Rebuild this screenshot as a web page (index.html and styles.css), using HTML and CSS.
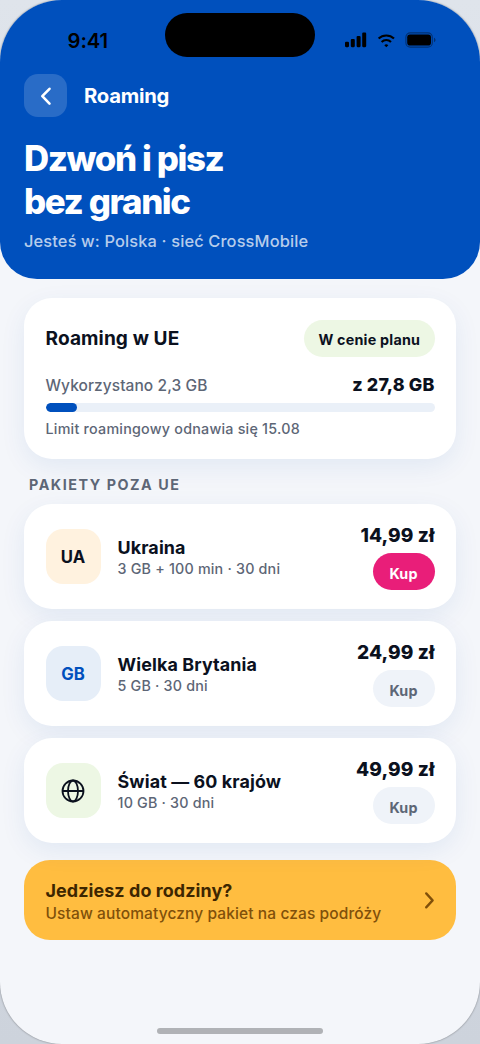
FILE: index.html
```html
<!DOCTYPE html>
<html lang="pl">
<head>
<meta charset="utf-8">
<title>Roaming</title>
<link rel="stylesheet" href="styles.css">
</head>
<body>
<div class="phone">
  <header class="hero">
    <div class="status">
      <span class="time">9:41</span>
      <span class="island"></span>
      <svg class="signals" width="92" height="16" viewBox="0 0 92 16">
        <rect x="0" y="9.8" width="4" height="5.4" rx="1.1"/>
        <rect x="5.8" y="7" width="4" height="8.2" rx="1.1"/>
        <rect x="11.6" y="4" width="4" height="11.2" rx="1.1"/>
        <rect x="17.2" y="0.6" width="4" height="14.6" rx="1.1"/>
        <g fill="none" stroke="#000" stroke-width="2.1">
          <path d="M33.6 6.6a11 11 0 0 1 15.4 0"/>
          <path d="M36.6 10a6.7 6.7 0 0 1 9.4 0"/>
        </g>
        <path d="M41.3 15.3l-2-2.1a2.8 2.8 0 0 1 4 0z"/>
        <rect x="60.9" y="0.9" width="26.4" height="14.2" rx="4.4" fill="none" stroke="#000" stroke-opacity=".4" stroke-width="1.1"/>
        <rect x="62.2" y="2.4" width="23.8" height="11.2" rx="2.8"/>
        <path d="M89 5.8c2 .7 2 3.7 0 4.4z" opacity=".4"/>
      </svg>
    </div>
    <nav class="nav">
      <button class="back" aria-label="Wstecz">
        <svg width="24" height="24" viewBox="0 0 24 24"><path d="M15.5 4.8L8.3 12.2l7.2 7.4"/></svg>
      </button>
      <span class="nav-title">Roaming</span>
    </nav>
    <h1 class="headline">Dzwoń i pisz<br>bez granic</h1>
    <p class="location">Jesteś w: Polska · sieć CrossMobile</p>
  </header>

  <main class="content">
    <section class="card usage">
      <div class="row">
        <h2 class="usage-title">Roaming w UE</h2>
        <span class="pill">W cenie planu</span>
      </div>
      <div class="row amounts">
        <span class="used">Wykorzystano 2,3 GB</span>
        <span class="total">z 27,8 GB</span>
      </div>
      <div class="track"><div class="fill"></div></div>
      <p class="renewal">Limit roamingowy odnawia się 15.08</p>
    </section>

    <h3 class="section-label">PAKIETY POZA UE</h3>

    <div class="packages">
      <article class="card package">
        <div class="badge badge-cream">UA</div>
        <div class="info"><div class="name">Ukraina</div><div class="detail">3 GB + 100 min · 30 dni</div></div>
        <div class="offer"><div class="price">14,99 zł</div><button class="buy buy-primary">Kup</button></div>
      </article>
      <article class="card package">
        <div class="badge badge-blue">GB</div>
        <div class="info"><div class="name">Wielka Brytania</div><div class="detail">5 GB · 30 dni</div></div>
        <div class="offer"><div class="price">24,99 zł</div><button class="buy">Kup</button></div>
      </article>
      <article class="card package">
        <div class="badge badge-green">
          <svg width="26" height="26" viewBox="0 0 26 26"><circle cx="13" cy="13" r="10.5"/><ellipse cx="13" cy="13" rx="5" ry="10.5"/><path d="M2.4 13h21.2"/></svg>
        </div>
        <div class="info"><div class="name">Świat — 60 krajów</div><div class="detail">10 GB · 30 dni</div></div>
        <div class="offer"><div class="price">49,99 zł</div><button class="buy">Kup</button></div>
      </article>
    </div>

    <a class="banner">
      <div class="banner-copy"><div class="banner-title">Jedziesz do rodziny?</div><div class="banner-text">Ustaw automatyczny pakiet na czas podróży</div></div>
      <svg width="10" height="18" viewBox="0 0 10 18"><path d="M1.2 2.4l6.4 7-6.4 7"/></svg>
    </a>
  </main>
  <div class="home-bar"></div>
</div>
</body>
</html>
```
FILE: styles.css
```css
* { box-sizing: border-box; }
body {
  margin: 0;
  width: 480px;
  height: 1044px;
  overflow: hidden;
  background: linear-gradient(#dfe4eb, #cdd3dc);
  font-family: Inter, "Liberation Sans", sans-serif;
  color: #0b111e;
}
h1, h2, h3, p { margin: 0; }
button { border: 0; padding: 0; font: inherit; }
.phone {
  display: flex;
  flex-direction: column;
  width: 480px;
  height: 1044px;
  border-radius: 62px;
  overflow: hidden;
  background: #f4f6fa;
  box-shadow: 0 0 2px rgba(0, 0, 0, .45);
}
.hero {
  height: 279px;
  flex: none;
  padding: 0 24px;
  border-radius: 0 0 37px 37px;
  background: #0050bd;
  color: #fff;
}
.status {
  display: grid;
  grid-template-columns: 141px 150px 1fr;
  height: 74px;
  padding-top: 13px;
  align-items: start;
}
.time {
  padding: 16px 0 0 43.6px;
  font-size: 20.3px;
  line-height: 24px;
  font-weight: 600;
  letter-spacing: -.1px;
  color: #000;
}
.island { height: 44px; border-radius: 22px; background: #000; }
.signals { margin: 19px 0 0 30px; }
.nav { display: flex; align-items: center; gap: 17px; height: 43px; }
.back {
  display: flex;
  align-items: center;
  justify-content: center;
  width: 43px;
  height: 43px;
  border-radius: 14px;
  background: rgba(255, 255, 255, .16);
}
.back svg { fill: none; stroke: #fff; stroke-width: 2.6; stroke-linecap: round; stroke-linejoin: round; }
.nav-title { font-size: 20.3px; font-weight: 650; letter-spacing: -.25px; }
.headline {
  margin-top: 20px;
  font-size: 34.8px;
  line-height: 43px;
  font-weight: 800;
  letter-spacing: -1.38px;
}
.location {
  margin-top: 7px;
  font-size: 16.4px;
  line-height: 22px;
  font-weight: 550;
  letter-spacing: .14px;
  color: rgba(255, 255, 255, .72);
}
.content { padding: 19px 24px 0; }
.card {
  border-radius: 28px;
  background: #fff;
  box-shadow: 0 8px 26px rgba(0, 80, 170, .08);
}
.usage { height: 161px; padding: 21.5px; }
.row { display: flex; align-items: center; justify-content: space-between; }
.usage-title { font-size: 19.1px; font-weight: 750; letter-spacing: .1px; }
.pill {
  height: 37px;
  padding: 1px 14.3px 0;
  border-radius: 19px;
  background: #edf7e4;
  font-size: 14.3px;
  line-height: 37px;
  font-weight: 750;
  letter-spacing: .23px;
}
.amounts { height: 22px; margin-top: 17px; }
.used { padding-top: 1px; font-size: 15.5px; font-weight: 550; letter-spacing: .07px; color: #5d6676; }
.total { font-size: 17.9px; font-weight: 760; letter-spacing: .15px; }
.track { height: 9.5px; margin-top: 7px; border-radius: 5px; background: #eaf0f8; overflow: hidden; }
.fill { width: 31px; height: 100%; border-radius: 5px; background: #0050bd; }
.renewal { margin-top: 7px; font-size: 14.3px; line-height: 20px; font-weight: 550; letter-spacing: .23px; color: #5d6676; }
.section-label {
  height: 45px;
  padding: 15.5px 0 0 5px;
  font-size: 14.3px;
  line-height: 20px;
  font-weight: 650;
  letter-spacing: 1.55px;
  color: #5d6676;
}
.packages { display: grid; gap: 12px; }
.package { display: flex; align-items: center; height: 105px; padding: 0 21.5px; }
.badge {
  display: flex;
  align-items: center;
  justify-content: center;
  width: 55px;
  height: 55px;
  margin-right: 17px;
  border-radius: 17px;
  font-size: 16.7px;
  font-weight: 720;
}
.badge-cream { background: #fff2df; }
.badge-blue { background: #e6eef8; color: #0050bd; }
.badge-green { background: #edf7e4; }
.badge svg { fill: none; stroke: #0b111e; stroke-width: 1.8; }
.info { flex: 1; padding-top: 2px; }
.name { font-size: 17.9px; line-height: 22px; font-weight: 750; letter-spacing: .12px; }
.detail { font-size: 14.3px; line-height: 20px; font-weight: 550; letter-spacing: .2px; color: #5d6676; }
.offer { display: flex; flex-direction: column; align-items: flex-end; gap: 6px; }
.price { font-size: 19.1px; line-height: 24px; font-weight: 770; letter-spacing: .1px; }
.buy {
  width: 62px;
  height: 37px;
  padding-top: 3px;
  border-radius: 19px;
  background: #eff3f9;
  color: #5d6676;
  font-size: 14.3px;
  font-weight: 750;
  letter-spacing: .15px;
}
.buy-primary { background: #e91e79; color: #fff; }
.banner {
  display: flex;
  align-items: center;
  justify-content: space-between;
  height: 80px;
  margin-top: 17px;
  padding: 0 21.5px;
  border-radius: 26px;
  background: #ffbd40;
}
.banner-copy { padding-top: 3px; }
.banner-title { font-size: 17.9px; line-height: 24px; font-weight: 750; letter-spacing: .1px; color: #3d2600; }
.banner-text { font-size: 15.5px; line-height: 22px; font-weight: 550; letter-spacing: .11px; color: #80500a; }
.banner svg { fill: none; stroke: #80500a; stroke-width: 2.3; stroke-linecap: round; stroke-linejoin: round; }
.home-bar {
  width: 166px;
  height: 6px;
  margin: auto auto 10px;
  border-radius: 3px;
  background: #b0b2b6;
}
```
